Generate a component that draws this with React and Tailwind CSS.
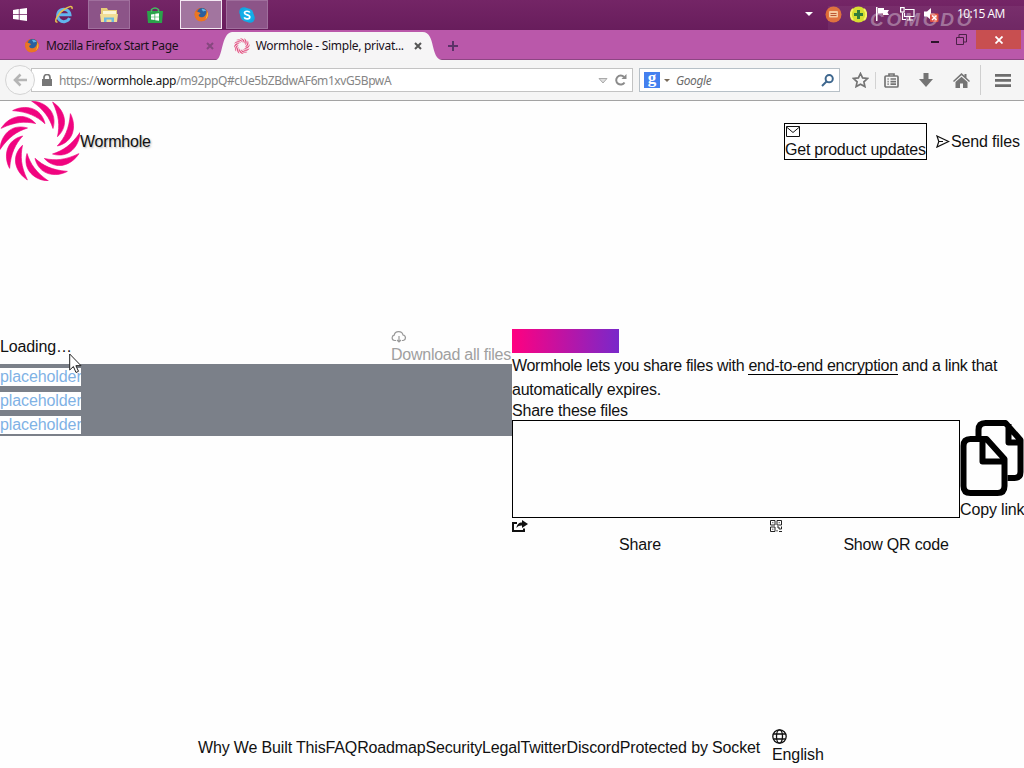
import React from 'react';

const BLADES = [0, 30, 60, 90, 120, 150, 180, 210, 240, 270, 300, 330];

const FOOTER_LINKS = [
  'Why We Built This',
  'FAQ',
  'Roadmap',
  'Security',
  'Legal',
  'Twitter',
  'Discord',
  'Protected by Socket',
];

function WormholeLogo({ className, color = '#f0047f' }) {
  return (
    <svg className={className} viewBox="-40 -40 80 80" fill={color}>
      {BLADES.map((angle) => (
        <path key={angle} transform={`rotate(${angle})`} d="M-8.500-40C5-39.500 18-29 13-12.500C9.500-23 4.500-31-8.500-40Z" stroke={color} strokeWidth=".6" />
      ))}
    </svg>
  );
}

function FirefoxIcon({ className }) {
  return (
    <svg className={className} viewBox="0 0 16 16">
      <circle cx="8" cy="8" r="7.3" fill="#e0641c" />
      <circle cx="8.6" cy="6.4" r="5.4" fill="#2a5f9e" />
      <path d="M8 2.2c2-.8 4.5.4 5 2.3-1.200-.6-2.600-.4-3.400.3z" fill="#63b4e4" />
      <path d="M1.200 4.200c.8 1 2 .8 3.300 1 1 .3 2.500.9 2.300 1.800-.4 1-1.900.8-1.800 2 .6 2.300 4.500 2.500 6.500.5 1.500-1.500 2.200-3.600 1.600-6 2.200 2.500 2.700 5.500 1.300 8-2 3.800-7.300 5-10.800 2.500C.6 11.600.1 7.800 1.200 4.200z" fill="#ea7624" />
      <path d="M14 4.500c1.500 3 .8 6.800-1.800 8.700 1.200-2.500 1.900-5.500 1.800-8.700z" fill="#f8c537" />
    </svg>
  );
}

function TaskbarItem({ active, open, wide, children }) {
  const frame = active
    ? 'border-[#f4e9f3] bg-[#a2759f]'
    : open
      ? 'border-[#a06f9d] bg-[#8c5488]'
      : 'border-transparent';
  return (
    <div className={`flex h-[29px] items-center justify-center border ${wide ? 'w-[42px]' : 'w-[40px]'} ${frame}`}>
      {children}
    </div>
  );
}

function Taskbar() {
  return (
    <div className="relative flex h-[30px] items-start justify-between bg-gradient-to-b from-[#742566] to-[#681d5c]">
      <div className="flex">
        <div className="flex h-[29px] w-[39px] items-center justify-center">
          <svg className="h-[13px] w-[14px]" viewBox="0 0 14 13" fill="#fff">
            <path d="M0 2l5.800-.9V6H0zM6.600 1L14 0v6H6.600zM0 6.800h5.800v4.900L0 10.900zM6.600 6.800H14V13l-7.400-1z" />
          </svg>
        </div>
        <div className="flex h-[29px] w-[49px] items-center justify-center">
          <svg className="h-[19px] w-[20px]" viewBox="0 0 20 19" fill="none">
            <path d="M15.500 13A6.200 6.200 0 1 1 16 9.800H5" stroke="#62b5ee" strokeWidth="3" />
            <path d="M3.500 17C-1 18 4 8 10 4.500c4-2.500 9-5 8-.5" stroke="#e8c14d" strokeWidth="1.500" />
          </svg>
        </div>
        <TaskbarItem open wide>
          <svg className="h-[16px] w-[18px]" viewBox="0 0 18 16">
            <path d="M1 1h6l1 2h9v11H1z" fill="#e8cd79" />
            <path d="M3 4h13v5H3z" fill="#fbf5d8" />
            <path d="M0 7h18l-1 8H1z" fill="#f2dd95" />
            <path d="M4 15v-4.500h10V15h-2.500v-2.500h-5V15z" fill="#6db8df" />
          </svg>
        </TaskbarItem>
        <div className="flex h-[29px] w-[50px] items-center justify-center">
          <svg className="h-[16px] w-[16px]" viewBox="0 0 16 16">
            <path d="M0 4h16l-1 12H1z" fill="#2ba34b" />
            <path d="M4.500 5V2.500Q8-.5 11.500 2.500V5" fill="none" stroke="#43bd60" strokeWidth="1.500" />
            <path d="M4 7.500l3.500-.6v2.800H4zM8.200 6.800l3.800-.6v3.500H8.200zM4 10.300h3.500v2.800L4 12.600zM8.200 10.300H12v3.500l-3.800-.6z" fill="#fff" />
          </svg>
        </div>
        <TaskbarItem active wide>
          <FirefoxIcon className="h-[15px] w-[15px]" />
        </TaskbarItem>
        <div className="w-1" />
        <TaskbarItem open wide>
          <svg className="h-[16px] w-[16px]" viewBox="0 0 16 16" fill="none">
            <circle cx="5" cy="5" r="4.800" fill="#12a5e0" />
            <circle cx="11" cy="11" r="4.800" fill="#12a5e0" />
            <circle cx="8" cy="8" r="6.800" fill="#14aee8" />
            <path d="M10.800 5.500C10 3.800 5.500 3.700 5.500 6c0 2.400 5.300 1.300 5.300 3.900 0 2.500-4.700 2.500-5.600.4" stroke="#fff" strokeWidth="1.700" />
          </svg>
        </TaskbarItem>
      </div>
      <div className="flex h-[28px] items-center pr-[18px]">
        <svg className="mr-[12px] h-[4px] w-[8px]" viewBox="0 0 8 4" fill="#fff">
          <path d="M0 0h8L4 4z" />
        </svg>
        <svg className="mr-[8px] h-[17px] w-[17px]" viewBox="0 0 17 17">
          <circle cx="8.500" cy="8.500" r="8" fill="#dd6b35" />
          <rect x="4" y="5" width="9" height="6.500" rx="1" fill="#f5c79b" />
          <path d="M5.500 7.500h6M5.500 9.500h6" stroke="#b94e27" />
        </svg>
        <svg className="mr-[9px] h-[17px] w-[17px]" viewBox="0 0 17 17">
          <circle cx="8.500" cy="8.500" r="8" fill="#d5dc27" />
          <path d="M3 3a8 8 0 0 0 0 11M14 3a8 8 0 0 1 0 11" stroke="#f5f35c" strokeWidth="2" fill="none" />
          <path d="M7 4h3v3h3v3h-3v3H7v-3H4V7h3z" fill="#267632" />
        </svg>
        <svg className="mr-[10px] h-[14px] w-[14px]" viewBox="0 0 14 14" fill="#fff">
          <path d="M0 0h1.500v14H0zM2 1h6v2h5l-1.500 2.500L13 8H7V6.500H2z" />
        </svg>
        <svg className="mr-[9px] h-[14px] w-[15px]" viewBox="0 0 15 14" fill="none" stroke="#fff" strokeWidth="1.200">
          <path d="M5 2.500h9v7H4.500V6M2.500 5.500v7H6M7 13h6M9.500 10v3" />
          <rect x=".6" y=".6" width="3.500" height="4.400" />
        </svg>
        <svg className="mr-[18px] h-[15px] w-[15px]" viewBox="0 0 15 15">
          <path d="M0 4.500h3L7 1v12L3 9.500H0z" fill="#fff" />
          <rect x="6" y="6.500" width="8.500" height="8.500" rx="1" fill="#df4638" />
          <path d="M8 8.500l4.500 4.500m0-4.500L8 13" stroke="#fff" strokeWidth="1.400" />
        </svg>
        <span className="w-[49px] whitespace-nowrap font-['Open_Sans','Noto_Sans',sans-serif] text-[12px] tracking-[-0.55px] text-white">10:15 AM</span>
      </div>
      <div className="absolute top-[6px] right-0 h-[24px] w-[196px] bg-white/5" />
      <span className="absolute top-[10px] left-[870px] font-['Liberation_Sans',sans-serif] text-[19px] leading-[20px] font-bold tracking-[2.8px] text-white/35 italic">
        COMODO
      </span>
    </div>
  );
}

function TabStrip() {
  return (
    <div className="flex h-[30px] justify-between border-b border-[#8d4683] bg-[#ba58aa] font-['Noto_Sans','Open_Sans',sans-serif] text-[12px] text-[#19101a]">
      <div className="flex h-[30px]">
        <div className="flex w-[216px] items-center pt-px pl-[24px]">
          <FirefoxIcon className="h-[15px] w-[16px]" />
          <span className="ml-[6px] w-[160px] whitespace-nowrap text-[12px] tracking-[-0.4px]">Mozilla Firefox Start Page</span>
          <svg className="h-[8px] w-[8px]" viewBox="0 0 8 8" stroke="#86477f" strokeWidth="2">
            <path d="M1 1l6 6M7 1L1 7" />
          </svg>
        </div>
        <svg className="h-[30px] w-[16px]" viewBox="0 0 16 30">
          <path d="M0 30C7 29 5 3 16 2V30z" fill="#f6f5f6" />
        </svg>
        <div className="mt-[2px] flex h-[28px] w-[190px] items-center bg-[#f6f5f6] pl-[2px]">
          <WormholeLogo className="h-[16px] w-[16px]" color="#e34a7c" />
          <span className="ml-[6px] w-[160px] whitespace-nowrap text-[12px] tracking-[-0.27px]">Wormhole - Simple, privat...</span>
          <svg className="ml-[2px] h-[8px] w-[8px] shrink-0" viewBox="0 0 8 8" stroke="#555" strokeWidth="2">
            <path d="M1 1l6 6M7 1L1 7" />
          </svg>
        </div>
        <svg className="h-[30px] w-[20px]" viewBox="0 0 20 30">
          <path d="M0 2C14 1 8 29 20 30H0z" fill="#f6f5f6" />
        </svg>
        <svg className="mt-[11px] ml-[6px] h-[10px] w-[10px]" viewBox="0 0 10 10" stroke="#5c3268" strokeWidth="2">
          <path d="M5 0v10M0 5h10" />
        </svg>
      </div>
      <div className="flex items-start">
        <svg className="mt-[11px] mr-[17px] h-[2px] w-[8px]" viewBox="0 0 8 2">
          <path d="M0 0h8v2H0z" fill="#2d142b" />
        </svg>
        <svg className="mt-[4px] mr-[9px] h-[11px] w-[11px]" viewBox="0 0 11 11" fill="none" stroke="#4c2147">
          <path d="M.5 3.500h7v7h-7zM3 3V.5h7.500V8H8" />
        </svg>
        <div className="mr-[3px] flex h-[19px] w-[45px] items-center justify-center bg-[#c84f50]">
          <svg className="h-[8px] w-[8px]" viewBox="0 0 8 8" stroke="#fff" strokeWidth="1.800">
            <path d="M.5.5l7 7m0-7l-7 7" />
          </svg>
        </div>
      </div>
    </div>
  );
}

function Toolbar() {
  return (
    <div className="flex h-[41px] items-center border-b border-[#a3a3a3] bg-[#f5f5f5] pl-[5px] font-['Noto_Sans','Open_Sans',sans-serif] text-[12px]">
      <div className="z-10 flex h-[30px] w-[30px] items-center justify-center rounded-full border border-[#d4d4d4] bg-[#f8f8f8]">
        <svg className="h-[14px] w-[14px]" viewBox="0 0 14 14" fill="none" stroke="#b5b5b5" strokeWidth="2.600">
          <path d="M7.500 1.500L2 7l5.500 5.500M2 7h12" />
        </svg>
      </div>
      <div className="-ml-[4px] flex h-[24px] w-[602px] items-center border border-[#c3c3c3] bg-white pl-[10px]">
        <svg className="h-[12px] w-[10px]" viewBox="0 0 10 12" fill="#777">
          <path d="M0 5h10v7H0z" />
          <path d="M2 6V3.500a3 3 0 0 1 6 0V6" fill="none" stroke="#777" strokeWidth="1.700" />
        </svg>
        <span className="ml-[7px] flex-1 pt-px whitespace-nowrap tracking-[-0.41px] text-[#858585]">
          https://<span className="tracking-[-0.25px] text-[#151515]">wormhole.app</span>/m92ppQ#cUe5bZBdwAF6m1xvG5BpwA
        </span>
        <svg className="mr-[7px] h-[7px] w-[10px]" viewBox="0 0 10 7" fill="#ddd" stroke="#aaa">
          <path d="M1 1.500h8L5 6z" />
        </svg>
        <svg className="mr-[5px] h-[12px] w-[12px]" viewBox="0 0 12 12" fill="none" stroke="#8b8b8b" strokeWidth="2">
          <path d="M9.500 8.500A4.500 4.500 0 1 1 9 3" />
          <path d="M11.500 0v5h-5z" fill="#8b8b8b" stroke="none" />
        </svg>
      </div>
      <div className="ml-[6px] flex h-[24px] w-[201px] items-center border border-[#b7c0c7] bg-white pl-[4px]">
        <div className="flex h-[16px] w-[16px] items-center justify-center bg-[#4480ef] font-['Liberation_Serif',serif] text-[17px] leading-[10px] font-bold text-white">
          <span className="-mt-[5px]">g</span>
        </div>
        <svg className="ml-[4px] h-[3px] w-[6px]" viewBox="0 0 6 3" fill="#776958">
          <path d="M0 0h6L3 3z" />
        </svg>
        <span className="ml-[6px] flex-1 pt-px tracking-[-0.4px] text-[#6b6b6b] italic">Google</span>
        <svg className="mr-[5px] h-[13px] w-[13px]" viewBox="0 0 13 13" fill="none" stroke="#3e678e" strokeWidth="2">
          <circle cx="8.200" cy="4.700" r="3.600" />
          <path d="M5.500 7.500L1 12" />
        </svg>
      </div>
      <div className="flex flex-1 items-center text-[#6d6d6d]">
        <svg className="ml-[12px] h-[16px] w-[17px]" viewBox="0 0 17 16" fill="none" stroke="#747474" strokeWidth="1.700">
          <path d="M8.500 1.500l2.100 4.400 4.900.6-3.600 3.300 1 4.800-4.400-2.400-4.400 2.400 1-4.800L1.500 6.500l4.900-.6z" />
        </svg>
        <div className="ml-[6px] h-[17px] w-px bg-[#d2d2d2]" />
        <svg className="ml-[8px] h-[15px] w-[15px]" viewBox="0 0 15 15" fill="none" stroke="#747474" strokeWidth="1.700">
          <rect x="1" y="3" width="13" height="11" rx="1" />
          <path d="M5 3V1h5v2M3.500 6h1.200M6.500 6H12M3.500 8.600h1.200M6.500 8.600H12M3.500 11.200h1.200M6.500 11.200H12" />
        </svg>
        <svg className="ml-[20px] h-[14px] w-[14px]" viewBox="0 0 14 14" fill="#747474">
          <path d="M4.500 0h5v6H14l-7 8-7-8h4.500z" />
        </svg>
        <svg className="ml-[20px] h-[15px] w-[17px]" viewBox="0 0 17 15" fill="#747474">
          <path d="M8.500 0l3 2.800V1h2v3.700L17 8l-1 1-7.500-6.700L1 9 0 8z" />
          <path d="M2.500 9l6-5.300 6 5.300v6H10v-4.500H7V15H2.500z" />
        </svg>
        <div className="ml-[10px] h-[30px] w-px bg-[#cfcfcf]" />
        <svg className="ml-[14px] h-[13px] w-[16px]" viewBox="0 0 16 13" fill="#6d6d6d">
          <path d="M0 0h16v2.700H0zM0 5.100h16v2.700H0zM0 10.200h16v2.700H0z" />
        </svg>
      </div>
    </div>
  );
}

function Header() {
  return (
    <header className="flex h-[80px] items-center justify-between">
      <div className="flex items-center">
        <WormholeLogo className="h-[80px] w-[80px]" />
        <span className="pt-[2px] tracking-[-0.25px] [text-shadow:1px_1px_2px_rgba(0,0,0,0.3)]">Wormhole</span>
      </div>
      <div className="flex items-center pr-[4px]">
        <div className="h-[37px] w-[143px] border border-black whitespace-nowrap">
          <svg className="mt-[2px] ml-px block h-[11px] w-[14px]" viewBox="0 0 14 11" fill="none" stroke="#111">
            <path d="M.5.5h13v10H.5zM.5 1L7 6.500 13.500 1" />
          </svg>
          <span className="block pt-[4px] leading-[18px] tracking-[-0.22px]">Get product updates</span>
        </div>
        <svg className="ml-[8px] h-[13px] w-[16px]" viewBox="0 0 16 14" fill="none" stroke="#111" strokeWidth="1.300">
          <path d="M1.500 1l12.500 6-12.500 6 2-6zM3.500 7h4.500" />
        </svg>
        <span className="w-[69px] pt-[2px] whitespace-nowrap tracking-[-0.15px]">Send files</span>
      </div>
    </header>
  );
}

function FileList() {
  return (
    <section>
      <div className="flex h-[35px] items-center justify-between">
        <span className="tracking-[-0.15px]">Loading…</span>
        <div className="h-[35px] w-[121px] whitespace-nowrap text-[#a0a0a0]">
          <svg className="mt-[2px] block h-[12px] w-[16px]" viewBox="0 0 16 12" fill="none" stroke="#999" strokeWidth="1.200">
            <path d="M5 9.500H3.500a2.700 2.700 0 0 1-.3-5.300C4-.3 11-.6 12 4a2.800 2.800 0 0 1 .3 5.500H11M8 5v6M6 9l2 2 2-2" />
          </svg>
          <span className="block pt-[3px] leading-[18px] tracking-[-0.25px]">Download all files</span>
        </div>
      </div>
      <ul className="bg-[#7b8089]">
        {[1, 2, 3].map((row) => (
          <li key={row} className="flex h-[24px] items-center pt-px">
            <span className="h-[18px] w-[81px] overflow-hidden bg-white leading-[18px] whitespace-nowrap tracking-[-0.1px] text-[#7fb2e5]">
              placeholder
            </span>
          </li>
        ))}
      </ul>
    </section>
  );
}

function QrIcon() {
  return (
    <svg className="block h-[12px] w-[12px]" viewBox="0 0 12 12" fill="none" stroke="#222">
      <path d="M.5.5h4.500v4.500H.5zM7 .5h4.500v4.500H7zM.5 7h4.500v4.500H.5zM2.300 2.700h1M8.700 2.700h1M2.300 9.200h1M7 7h2v2h2.500V6.500M7 11.500V10M9 11.500h3" />
    </svg>
  );
}

function SharePanel() {
  return (
    <section>
      <div className="h-[24px] w-[107px] bg-[linear-gradient(to_right,#ff0080,#7928ca)]" />
      <p className="h-[48px] pt-px leading-[24px] tracking-[-0.3px]">
        Wormhole lets you share files with{' '}
        <a className="border-b border-black">end-to-end encryption</a> and a link that{' '}
        <span className="tracking-[-0.22px]">automatically expires.</span>
      </p>
      <p className="h-[19px] leading-[19px] tracking-[-0.2px]">Share these files</p>
      <div className="flex h-[98px]">
        <div className="h-[98px] w-[448px] border border-black" />
        <div className="w-[64px] whitespace-nowrap">
          <svg className="block h-[78px] w-[64px]" viewBox="0 0 64 78" fill="none" stroke="#000" strokeWidth="6" strokeLinejoin="round">
            <path d="M18.500 18V10q0-7 7-7h20l15 17v32q0 6-6 6h-7M48.500 4v18.500h12" />
            <path d="M3.500 26q0-7 7-7h16l18 20v27q0 7-7 7h-27q-7 0-7-7zM22.500 20v21.500h22" />
          </svg>
          <span className="block leading-[24px] tracking-[-0.15px]">Copy link</span>
        </div>
      </div>
      <div className="grid grid-cols-2 text-center">
        <div>
          <svg className="mt-[2px] block h-[12px] w-[16px]" viewBox="0 0 16 12" fill="#111">
            <path d="M0 2h5v2H2v6h9V8.500h2V12H0z" />
            <path d="M10 0l6 4-6 4V5.500C7.500 5.400 6 6 4.500 8 4.700 4.500 7 2.500 10 2.500z" />
          </svg>
          <span className="block pt-[3px] leading-[20px] tracking-[-0.1px]">Share</span>
        </div>
        <div>
          <div className="mt-[2px] ml-[2px]">
            <QrIcon />
          </div>
          <span className="block pt-[3px] leading-[20px] tracking-[-0.2px]">Show QR code</span>
        </div>
      </div>
    </section>
  );
}

function Footer() {
  return (
    <footer className="mt-auto flex h-[40px] items-center pl-[198px] whitespace-nowrap">
      <nav className="flex w-[574px] tracking-[-0.15px]">
        {FOOTER_LINKS.map((label) => (
          <a key={label}>{label}</a>
        ))}
      </nav>
      <div className="-mt-[3px]">
        <svg className="block h-[15px] w-[15px]" viewBox="0 0 15 15" fill="none" stroke="#111" strokeWidth="1.300">
          <circle cx="7.500" cy="7.500" r="6.700" />
          <ellipse cx="7.500" cy="7.500" rx="3" ry="6.700" />
          <path d="M1.500 5h12M1.500 10h12" />
        </svg>
        <span className="block pt-[2px] leading-[18px] tracking-[-0.1px]">English</span>
      </div>
    </footer>
  );
}

export default function App() {
  return (
    <div className="relative flex h-[768px] w-[1024px] flex-col overflow-hidden bg-[#fefefe] font-['Liberation_Sans',Arial,sans-serif] text-[16px] text-[#111]">
      <Taskbar />
      <TabStrip />
      <Toolbar />
      <Header />
      <main className="mt-[148px] grid grid-cols-2">
        <FileList />
        <SharePanel />
      </main>
      <Footer />
      <svg className="absolute top-[353px] left-[69px] h-[21px] w-[13px]" viewBox="0 0 13 21" fill="#fff" stroke="#222">
        <path d="M.7 1v16l3.700-3.500L7 19.500l2.500-1.200-2.600-5.600H12z" />
      </svg>
    </div>
  );
}
